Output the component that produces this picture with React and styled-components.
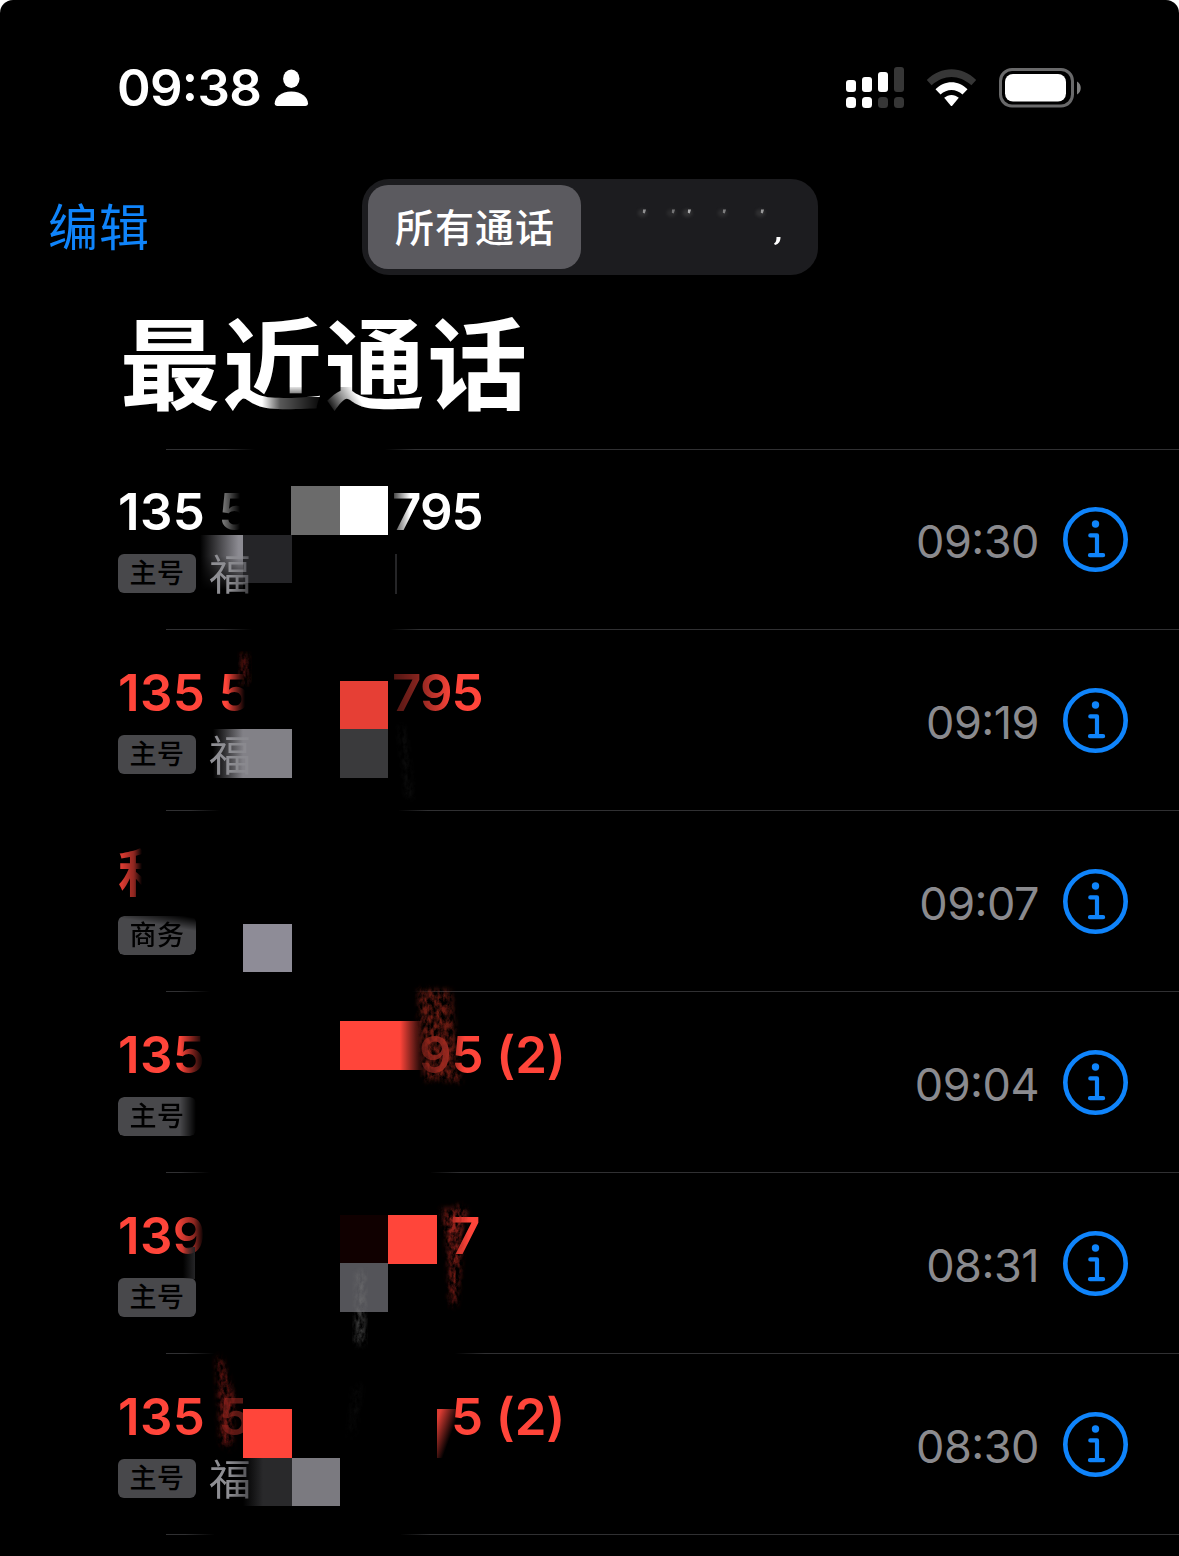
import React from "react";
import styled, { createGlobalStyle, css } from "styled-components";

const RED = "#ff453a";
const BLUE = "#0f84fb";
const CJK = '"Inter", "Noto Sans CJK SC", sans-serif';

const Global = createGlobalStyle`
  html, body { margin: 0; background: #fff; }
  body { font-family: ${CJK}; -webkit-font-smoothing: antialiased; }
`;

const Screen = styled.main`
  position: relative;
  width: 1179px;
  height: 1556px;
  overflow: hidden;
  box-sizing: border-box;
  background: #000;
  border-radius: 13px 13px 0 0;
  color: #fff;
`;

const StatusBar = styled.div`
  display: flex;
  align-items: center;
  justify-content: space-between;
  height: 56px;
  padding: 60px 98px 0 117px;
`;

const Clock = styled.div`
  display: flex;
  align-items: center;
  gap: 13px;
  font-size: 51px;
  font-weight: 600;
  font-feature-settings: "case" 1;
  line-height: 58px;
  letter-spacing: -0.7px;
`;

const StatusIcons = styled.div`
  display: flex;
  align-items: center;
  gap: 21px;
`;

const NavBar = styled.nav`
  display: flex;
  align-items: center;
  height: 96px;
  margin-top: 63px;
  padding-left: 48px;
`;

const EditButton = styled.button`
  width: 314px;
  padding: 1px 0 0;
  border: 0;
  background: none;
  color: ${BLUE};
  font: 400 50px/60px ${CJK};
  letter-spacing: 1px;
  text-align: left;
`;

const Segments = styled.div`
  display: flex;
  box-sizing: border-box;
  width: 456px;
  height: 96px;
  padding: 6px;
  border-radius: 27px;
  background: #1c1c1f;
`;

const Segment = styled.div`
  display: flex;
  align-items: center;
  justify-content: center;
  box-sizing: border-box;
  width: ${(p) => (p.$active ? 213 : 231)}px;
  height: 84px;
  padding: ${(p) => (p.$active ? "0 0 4px 1px" : "2px 0 0 23px")};
  border-radius: 20px;
  background: ${(p) => (p.$active ? "#5b5a5f" : "transparent")};
  font-size: 39px;
  font-weight: 500;
  letter-spacing: 1px;
`;

const Title = styled.h1`
  position: relative;
  height: 174px;
  margin: 0;
  padding-left: 120px;
  box-sizing: border-box;
  font-size: 100px;
  font-weight: 700;
  line-height: 182px;
  letter-spacing: 2.4px;
`;

const TitleSmudge = styled.span`
  position: absolute;
  left: ${(p) => p.$x}px;
  top: ${(p) => p.$y}px;
  width: ${(p) => p.$w}px;
  height: ${(p) => p.$h}px;
  background: ${(p) => p.$fill};
`;

const Divider = styled.div`
  height: 1px;
  margin-left: 166px;
  background: linear-gradient(
    to right,
    #303032 ${(p) => p.$from - 196}px,
    transparent ${(p) => p.$from - 166}px,
    transparent ${(p) => p.$to - 166}px,
    #303032 ${(p) => p.$to - 136}px
  );
`;

const Row = styled.section`
  position: relative;
  height: ${(p) => (p.$first ? 180 : 181)}px;
`;

const RowBody = styled.div`
  display: flex;
  justify-content: space-between;
  padding: ${(p) => (p.$first ? 32 : 33)}px 51px 0 118px;
`;

const NumberLine = styled.div`
  display: flex;
  height: 60px;
  color: ${(p) => (p.$missed ? RED : "#fff")};
  font-size: 51px;
  font-weight: 600;
  line-height: 60px;
  white-space: pre;
`;

const fade = (stops) => css`
  mask-image: linear-gradient(to right, ${stops});
`;

const Lead = styled.span`
  width: ${(p) => p.$w}px;
  letter-spacing: 0.4px;
  ${(p) => p.$fade && fade(p.$fade)}
`;

const Tail = styled.span`
  letter-spacing: ${(p) => p.$spacing || -0.1}px;
  ${(p) => p.$fade && fade(p.$fade)}
`;

const SubLine = styled.div`
  display: flex;
  align-items: center;
  gap: 13px;
  height: 39px;
  margin-top: 12px;
`;

const Badge = styled.span`
  width: 78px;
  height: 39px;
  border-radius: 6px;
  background: #48484b;
  color: #000;
  font-size: 27px;
  font-weight: 500;
  line-height: 40px;
  letter-spacing: 0.5px;
  text-align: center;
  ${(p) => p.$fade && css`mask-image: ${p.$fade};`}
`;

const Place = styled.span`
  position: relative;
  z-index: 1;
  color: #8e8e93;
  font-size: 42px;
  line-height: 39px;
  padding-top: 2px;
  mask-image: ${(p) => p.$fade};
`;

const Trailing = styled.div`
  display: flex;
  align-items: center;
  gap: 23px;
  height: 66px;
  margin-top: 25px;
`;

const Time = styled.time`
  color: #8a8a8e;
  font-size: 45px;
  font-feature-settings: "case" 1;
  line-height: 66px;
  padding-top: 3px;
  letter-spacing: -0.5px;
`;

const Tile = styled.i`
  position: absolute;
  left: ${(p) => p.$x}px;
  top: ${(p) => p.$y}px;
  width: ${(p) => p.$w || 49}px;
  height: ${(p) => p.$h || 49}px;
  background: ${(p) => p.$fill};
  ${(p) => p.$mask && css`mask-image: ${p.$mask};`}
`;

const Grain = styled.svg`
  position: absolute;
  left: 0;
  top: 0;
  width: 600px;
  height: 181px;
  overflow: visible;
`;

const FilterDefs = styled.svg`
  position: absolute;
`;

const PersonIcon = () => (
  <svg width="35" height="38" viewBox="0 0 35 38" fill="#fff">
    <ellipse cx="17.3" cy="9.8" rx="8.2" ry="9.2" />
    <path d="M3.5 37C1.6 37 .7 36 .7 34.2c0-5.6 6.5-11.8 16.6-11.8S34 28.6 34 34.2c0 1.8-1 2.8-2.8 2.8Z" />
  </svg>
);

const SignalIcon = () => (
  <svg width="60" height="42" viewBox="0 0 60 42" fill="#fff">
    <rect x="1" y="13" width="10" height="12" rx="3" />
    <rect x="17" y="10" width="10" height="15" rx="3" />
    <rect x="33" y="5" width="10" height="20" rx="3" />
    <rect x="49" y="0" width="10" height="25" rx="3" fill="#363636" />
    <rect x="1" y="30" width="10" height="11" rx="3.5" />
    <rect x="17" y="30" width="10" height="11" rx="3.5" />
    <rect x="33" y="30" width="10" height="11" rx="3.5" fill="#363636" />
    <rect x="49" y="30" width="10" height="11" rx="3.5" fill="#363636" />
  </svg>
);

const WifiIcon = () => (
  <svg width="51" height="38" viewBox="0 0 51 38">
    <path d="M.8 11C15-3.3 36-3.3 50.2 11l-4.8 5.3C33 5.3 18 5.3 5.6 16.3Z" fill="#363636" />
    <path d="M9.5 20.3c9-9.4 23-9.4 32 0l-5 5.2c-6.5-6-15.5-6-22 0Z" fill="#fff" />
    <path d="M18.2 28.8c4.2-3.9 10.4-3.9 14.6 0l-6.4 7.6q-.9 1-1.8 0Z" fill="#fff" />
  </svg>
);

const BatteryIcon = () => (
  <svg width="83" height="40" viewBox="0 0 83 40">
    <rect x="2.5" y="1.5" width="72" height="36.5" rx="11.5" fill="none" stroke="#69696a" strokeWidth="3" />
    <rect x="7" y="6" width="61" height="27.5" rx="8" fill="#fff" />
    <path d="M79 13.5c5 2.5 5 10.5 0 13Z" fill="#808080" />
  </svg>
);

const InfoIcon = () => (
  <svg width="66" height="66" viewBox="0 0 66 66" fill="none" stroke={BLUE} strokeWidth="4.2" strokeLinecap="round" strokeLinejoin="round">
    <circle cx="33.5" cy="32.5" r="30.2" strokeWidth="4.6" />
    <circle cx="33.5" cy="17" r="3.7" fill={BLUE} stroke="none" />
    <path d="M28.3 28.4h6.7v19.5M28 48.2h13.1" />
  </svg>
);

const HiddenLabel = () => (
  <svg width="150" height="44" viewBox="0 0 150 44">
    {[[10, 0.6], [39, 0.45], [55, 0.75], [90, 0.5], [128, 0.65]].map(([x, o]) => (
      <g key={x} opacity={o}>
        <ellipse cx={x - 0.5} cy="7" rx="5" ry="4" fill="#555" opacity=".5" filter="url(#soft)" />
        <path d={`M${x} 3.5h3l-1.2 4-2-.8Z`} fill="#ddd" />
      </g>
    ))}
    <path d="M143.5 31h4c0 4-1.5 7-5.5 8l-1-1.5c2-1 2.5-3 2.5-6.5Z" fill="#fff" />
  </svg>
);

const GrainFilter = () => (
  <FilterDefs width="0" height="0">
    <filter id="grain" x="-30%" y="-8%" width="160%" height="116%">
      <feTurbulence type="fractalNoise" baseFrequency="0.25 0.13" numOctaves="4" seed="4" result="n" />
      <feColorMatrix in="n" type="matrix" values="0 0 0 0 0  0 0 0 0 0  0 0 0 0 0  2.4 0 0 0 -0.7" result="a" />
      <feGaussianBlur in="SourceGraphic" stdDeviation="3" result="s" />
      <feComposite in="s" in2="a" operator="in" />
    </filter>
    <filter id="soft" x="-50%" y="-50%" width="200%" height="200%">
      <feGaussianBlur stdDeviation="1.5" />
    </filter>
  </FilterDefs>
);

const calls = [
  {
    lead: "135 5", w: 127, fade: "#000 98px, #aaa 99px, rgba(0,0,0,.5) 104px, transparent 122px",
    tail: "795", gap: 147, spacing: -1, tailFade: "rgba(0,0,0,.2) 0, #000 18px", time: "09:30", line: [225, 385],
    badge: "主号", place: "福", placeFade: "linear-gradient(to right, #000 20px, rgba(0,0,0,.4) 42px)",
    tiles: [
      [291, 37, 49, 49, "#6b6b6b"], [339.5, 37, 48.5, 49, "#fff"],
      [200, 86, 43, 60, "linear-gradient(to right, transparent, #8c8b92 90%)", "linear-gradient(#000 35%, transparent 92%)"],
      [243, 86, 48.5, 48, "#252528"], [395, 105, 2, 40, "#252527"],
    ],
  },
  {
    lead: "135 5", w: 127, fade: "#000 108px, transparent 127px", tail: "795", gap: 147, spacing: -1,
    tailFade: "rgba(0,0,0,.3) 0, rgba(0,0,0,.5) 24px, rgba(0,0,0,.8) 46px, #000 60px", missed: true,
    time: "09:19", line: [222, 390], badge: "主号", place: "福",
    placeFade: "linear-gradient(to right, #000 22px, rgba(0,0,0,.5) 42px)",
    tiles: [
      [339.5, 52, 48.5, 48, "#e63f35"], [339.5, 100, 48.5, 48.5, "#3a3a3c"],
      [213, 99.5, 79, 49, "linear-gradient(to right, transparent, #828187 30px)"],
    ],
    grains: [["M240 25h8l1 30h-8Z", "#801b15", 0.7], ["M399 96l5 2 9 70-6 2Z", "#333", 0.35]],
  },
  {
    lead: "利", w: 25, fade: "rgba(0,0,0,.85) 4px, rgba(0,0,0,.55) 16px, transparent 24px", missed: true,
    time: "09:07", line: [190, 398], badge: "商务",
    badgeFade: "linear-gradient(190deg, transparent 2px, #000 15px)",
    tiles: [[243, 113.5, 48.5, 48, "#8e8c97"]],
  },
  {
    lead: "135", w: 86, fade: "#000 62px, transparent 86px", tail: "95 (2)", gap: 215,
    tailFade: "rgba(0,0,0,.3) 0, rgba(0,0,0,.55) 28px, #000 46px", missed: true,
    time: "09:04", line: [180, 412], badge: "主号",
    badgeFade: "linear-gradient(to right, #000 62px, transparent 78px)",
    tiles: [[339.5, 29.5, 84, 49, "linear-gradient(to right, #ff453a 60px, transparent)"]],
    grains: [["M418 -2L451 0L456 65L461 92L440 88L425 90Z", "#a52a1f", 0.65]],
  },
  {
    lead: "139", w: 86, fade: "#000 57px, rgba(0,0,0,.55) 76px, transparent 86px", tail: "7", gap: 247,
    tailFade: "rgba(0,0,0,.7) 0, #000 18px", missed: true, time: "08:31", line: [180, 430], badge: "主号",
    tiles: [
      [339.5, 43, 48.5, 48, "#100000"], [388, 43, 49, 48.5, RED], [339.5, 91, 48.5, 49, "#545459"],
      [183, 75, 12, 32, "linear-gradient(to right, transparent, #252527)"],
    ],
    grains: [["M442 36l9 3 8-6 8 6-5 18-3 45-4 32-4-1-3-60Z", "#b52a21", 0.8], ["M357 100l8 0-1 72-9 0Z", "#777", 0.6]],
  },
  {
    lead: "135 5", w: 125, fade: "#000 90px, rgba(0,0,0,.35) 101px, rgba(0,0,0,.35) 125px", tail: "5 (2)", gap: 208,
    tailFade: "#000 0, #000 100%", missed: true, time: "08:30", line: [185, 455], badge: "主号", place: "福",
    placeFade: "linear-gradient(to right, #000 20px, rgba(0,0,0,.5) 42px)",
    tiles: [
      [243, 56, 48.5, 49, RED], [243, 105, 48.5, 48, "linear-gradient(to right, transparent, #29292b 20px)"],
      [291.5, 105, 48, 48, "#7b7a80"],
      [437, 56, 23, 49, "linear-gradient(110deg, #dc3c33 4px, transparent 22px)"],
    ],
    grains: [["M217 4l4 0 13 40-3 52-10-5Z", "#a0241c", 0.7], ["M354 34l8-3-8 50-5 5Z", "#333", 0.3]],
  },
];

function CallRow({ call, first }) {
  return (
    <Row $first={first}>
      <Divider $from={call.line[0] + 30} $to={call.line[1]} />
      <RowBody $first={first}>
        <div>
          <NumberLine $missed={call.missed}>
            <Lead $w={call.w} $fade={call.fade}>{call.lead}</Lead>
            {call.tail && (
              <Tail $fade={call.tailFade} $spacing={call.spacing} style={{ marginLeft: call.gap }}>
                {call.tail}
              </Tail>
            )}
          </NumberLine>
          <SubLine>
            <Badge $fade={call.badgeFade}>{call.badge}</Badge>
            {call.place && <Place $fade={call.placeFade}>{call.place}</Place>}
          </SubLine>
        </div>
        <Trailing>
          <Time>{call.time}</Time>
          <InfoIcon />
        </Trailing>
      </RowBody>
      {call.tiles.map(([x, y, w, h, fill, mask], i) => (
        <Tile key={i} $x={x} $y={y} $w={w} $h={h} $fill={fill} $mask={mask} />
      ))}
      {call.grains && (
        <Grain>
          {call.grains.map(([d, fill, opacity], i) => (
            <path key={i} d={d} fill={fill} opacity={opacity} filter="url(#grain)" />
          ))}
        </Grain>
      )}
    </Row>
  );
}

export default function App() {
  return (
    <>
      <Global />
      <GrainFilter />
      <Screen>
        <StatusBar>
          <Clock>09:38<PersonIcon /></Clock>
          <StatusIcons><SignalIcon /><WifiIcon /><BatteryIcon /></StatusIcons>
        </StatusBar>
        <NavBar>
          <EditButton>编辑</EditButton>
          <Segments>
            <Segment $active>所有通话</Segment>
            <Segment><HiddenLabel /></Segment>
          </Segments>
        </NavBar>
        <Title>
          最近通话
          <TitleSmudge $x={262} $y={122} $w={62} $h={20} $fill="linear-gradient(to right, transparent, rgba(0,0,0,.65) 18px, rgba(0,0,0,.95) 56px)" />
          <TitleSmudge $x={286} $y={112} $w={18} $h={10} $fill="linear-gradient(rgba(0,0,0,.1), rgba(0,0,0,.7))" />
          <TitleSmudge $x={324} $y={112} $w={50} $h={30} $fill="linear-gradient(60deg, #000 8px, rgba(0,0,0,.4) 26px, transparent 40px)" />
        </Title>
        {calls.map((call, i) => <CallRow key={call.time} call={call} first={i === 0} />)}
        <Divider $from={215} $to={400} />
      </Screen>
    </>
  );
}
